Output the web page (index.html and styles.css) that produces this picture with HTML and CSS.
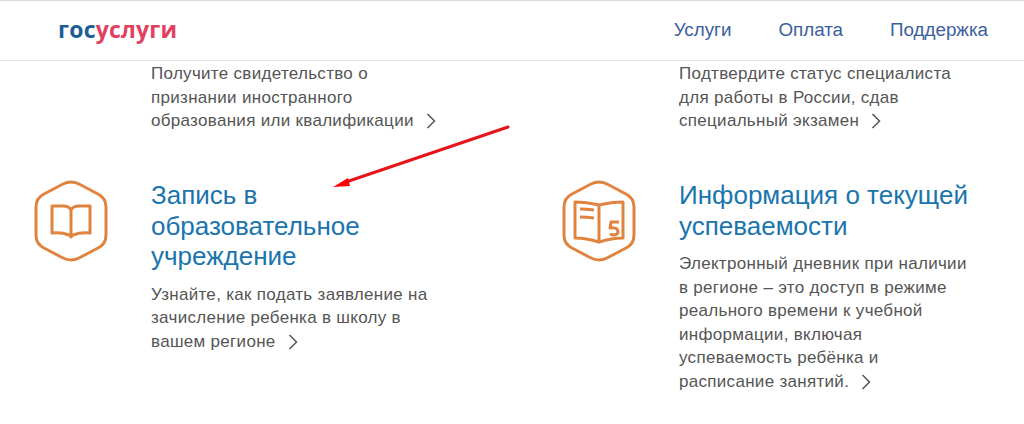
FILE: index.html
```html
<!DOCTYPE html>
<html lang="ru">
<head>
    <meta charset="UTF-8">
    <meta name="viewport" content="width=device-width, initial-scale=1.0">
    <title>Госуслуги</title>
    <link rel="stylesheet" href="styles.css">
</head>
<body>
    <header class="header">
        <div class="logo"><span class="logo-blue">гос</span><span class="logo-red">услуги</span></div>
        <nav class="nav">
            <a href="#">Услуги</a>
            <a href="#">Оплата</a>
            <a href="#">Поддержка</a>
        </nav>
    </header>

    <main class="grid">
        <section class="item item-top">
            <p class="desc">Получите свидетельство о<br>признании иностранного<br>образования или квалификации<svg class="chevron" viewBox="0 0 10 16"><path d="M1.5 1l7 7-7 7"/></svg></p>
        </section>
        <section class="item item-top">
            <p class="desc">Подтвердите статус специалиста<br>для работы в России, сдав<br>специальный экзамен<svg class="chevron" viewBox="0 0 10 16"><path d="M1.5 1l7 7-7 7"/></svg></p>
        </section>

        <section class="item">
            <svg class="icon" viewBox="0 0 74 82">
                <path class="hex" d="M29 4q8-4 16 0l19 10q8 4 8 13v28q0 9-8 13l-19 10q-8 4-16 0l-19-10q-8-4-8-13v-28q0-9 8-13z"/>
                <path class="line" d="M37 57l-2-2q-8-3-17-2v-27h11q6 0 8 4q2-4 8-4h11v27q-9-1-17 2zM37 30v25"/>
            </svg>
            <div>
                <h2><a href="#">Запись в<br>образовательное<br>учреждение</a></h2>
                <p class="desc">Узнайте, как подать заявление на<br>зачисление ребенка в школу в<br>вашем регионе<svg class="chevron" viewBox="0 0 10 16"><path d="M1.500 1l7 7-7 7"/></svg></p>
            </div>
        </section>

        <section class="item">
            <svg class="icon" viewBox="0 0 74 82">
                <path class="hex" d="M29 4q8-4 16 0l19 10q8 4 8 13v28q0 9-8 13l-19 10q-8 4-16 0l-19-10q-8-4-8-13v-28q0-9 8-13z"/>
                <path class="line" d="M37 25q-13-3-24-3v36q11 0 24 4q13-4 24-4v-36q-11 0-24 3zM37 25v37M18 29q7 0 14 1M18 37q7 0 14 1"/>
                <path class="five" d="M57 42h-8l-1 6q5-1 7 1q2 3 0 5q-3 2-7 0"/>
            </svg>
            <div>
                <h2><a href="#">Информация о текущей<br>успеваемости</a></h2>
                <p class="desc">Электронный дневник при наличии<br>в регионе – это доступ в режиме<br>реального времени к учебной<br>информации, включая<br>успеваемость ребёнка и<br>расписание занятий.<svg class="chevron" viewBox="0 0 10 16"><path d="M1.500 1l7 7-7 7"/></svg></p>
            </div>
        </section>
    </main>

    <svg class="arrow" viewBox="0 0 200 70">
        <path d="M188 5L26 60" stroke="#e8141c" stroke-width="3" stroke-linecap="round"/>
        <path d="M13 65l15-9 2 8z" fill="#f00"/>
    </svg>
</body>
</html>
```

FILE: styles.css
```css
body {
    font-family: "Liberation Sans", Arial, sans-serif;
    margin: 0;
    padding: 0;
    background-color: #fff;
    overflow: hidden;
}

.header {
    display: flex;
    justify-content: space-between;
    align-items: center;
    height: 59px;
    padding: 0 36px 0 58px;
    border-top: 1px solid #d9d9d9;
    border-bottom: 1px solid #e6e6e6;
}

.logo {
    font-family: "Open Sans", sans-serif;
    font-size: 23px;
    font-weight: 700;
    letter-spacing: 0.2px;
    margin-top: -3px;
}

.logo-blue {
    color: #1d5d96;
}

.logo-red {
    color: #e2405f;
}

.nav {
    display: flex;
    gap: 47px;
    margin-top: -1px;
}

.nav a {
    color: #3c5f9c;
    font-size: 18.800px;
    text-decoration: none;
}

.grid {
    display: grid;
    grid-template-columns: 528px 1fr;
    padding: 1px 0 0 35px;
}

.item {
    display: flex;
    gap: 43px;
    padding-top: 54px;
}

.item-top {
    display: block;
    height: 64px;
    padding: 0 0 0 116px;
}

.icon {
    flex: none;
    width: 74px;
    height: 82px;
    margin: 0 0 0 -1px;
}

.hex, .line, .five {
    fill: none;
    stroke: #e0833f;
    stroke-width: 3;
    stroke-linejoin: round;
}

h2 {
    margin: 0 0 11px;
    font-size: 26px;
    font-weight: 400;
    line-height: 30.500px;
}

h2 a {
    color: #1a75ad;
    text-decoration: none;
}

.desc {
    margin: 0;
    color: #555;
    font-size: 17px;
    line-height: 23.500px;
    letter-spacing: 0.3px;
}

.chevron {
    width: 10px;
    height: 16px;
    margin-left: 12px;
    vertical-align: -3px;
    fill: none;
    stroke: #555;
    stroke-width: 1.500;
}

.arrow {
    position: absolute;
    left: 320px;
    top: 122px;
    width: 200px;
    height: 70px;
}
```
